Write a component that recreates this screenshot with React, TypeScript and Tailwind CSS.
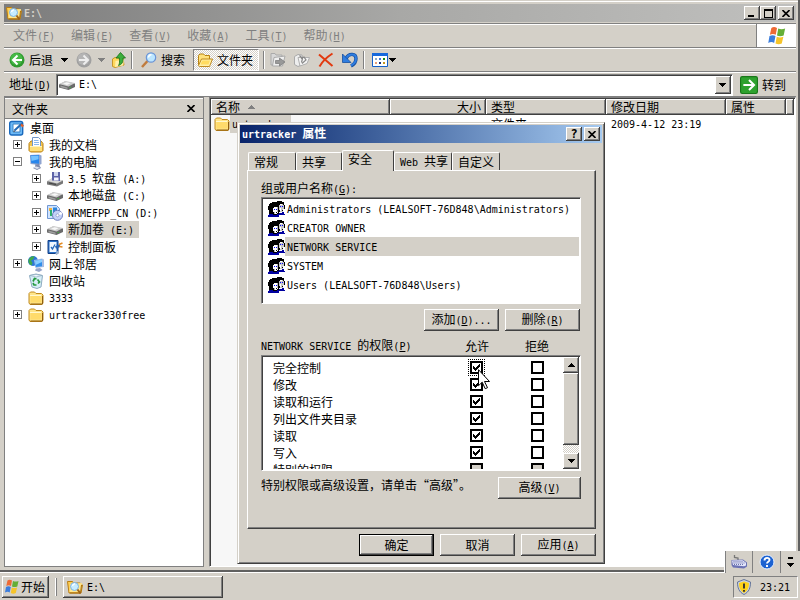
import { useState } from "react";
import type { ReactNode } from "react";

const RAISED =
  "bg-[#d4d0c8] shadow-[inset_-1px_-1px_0_#404040,inset_1px_1px_0_#fff,inset_-2px_-2px_0_#808080]";
const SUNKEN =
  "border border-t-[#808080] border-l-[#808080] border-r-white border-b-white shadow-[inset_1px_1px_0_#404040]";
const BAR = "border-t border-t-white border-b border-b-[#808080]";

// Latin runs are set in the half-width face; "&" marks the underlined access key
function Label({ text, className = "" }: { text: string; className?: string }) {
  return (
    <span className={`whitespace-pre ${className}`}>
      {text.split(/([ -~]+)/).map((part, i) => {
        if (i % 2 === 0) return part;
        const [before, after] = part.split("&");
        return (
          <span key={i} className="font-['DejaVu_Sans_Mono',monospace] text-[10px]">
            {before}
            {after && <u className="underline-offset-1">{after[0]}</u>}
            {after?.slice(1)}
          </span>
        );
      })}
    </span>
  );
}

function Svg({ children, size = 16 }: { children: ReactNode; size?: number }) {
  return (
    <svg width={size} height={size} viewBox="0 0 16 16" className="shrink-0" aria-hidden="true">
      {children}
    </svg>
  );
}

const FolderIcon = () => (
  <Svg>
    <path d="M1 3.5 2.5 2h4L8 3.5h5.5L15 5v8l-1 1.5H2L1 13z" fill="#ffe58a" stroke="#c08a1e" />
    <path d="M2.5 6h11v6.5h-11z" fill="#ffdb6b" />
    <path d="M2 5.5h11" stroke="#fff8d0" />
    <path d="M14.5 6v8H2.5" fill="none" stroke="#8f5f10" />
  </Svg>
);

const FolderSearchIcon = () => (
  <Svg>
    <path d="M.5 2.5h5l1 1.500H13l2.500 2-1.500 8H2z" fill="#ffcf52" stroke="#b97d12" />
    <path d="m3 5 12-1-1.500 9H2.500z" fill="#ffe68c" />
    <path d="M14.500 6 13.500 14H3" fill="none" stroke="#a56d10" />
    <circle cx="7.500" cy="7.500" r="4" fill="#c6ecff" stroke="#7fb3e0" />
    <path d="m10.500 10.500 3 4" stroke="#a06418" strokeWidth="2" />
    <path d="M5.500 7q.5-2.300 2.500-2.200" stroke="#fff" strokeWidth="1.300" fill="none" />
  </Svg>
);

const FolderOpenIcon = () => (
  <Svg>
    <path d="M1.500 13V3.500L3 2h3.500L8 3.500h4.500V7" fill="#ffe27c" stroke="#b98312" />
    <path d="M1.500 13.500 4.500 7h11l-3 7.500h-10z" fill="#fff0a8" stroke="#c08a1e" />
    <path d="m4 11 1.500-2.500h7.500l-1.500 4H3.500z" fill="#ffdc60" />
  </Svg>
);

const ArrowBall = ({ back = false }: { back?: boolean }) => (
  <Svg>
    <circle cx="8" cy="8" r="7.500" fill={back ? "#2f9a2f" : "#a0a0a0"} />
    <circle cx="7.500" cy="7" r="6" fill={back ? "#46b946" : "#b4b4b4"} />
    <path
      d={back ? "M8.500 3.500 4 8l4.500 4.500M4.500 8H13" : "M7.500 3.500 12 8l-4.500 4.500M11.500 8H3"}
      fill="none"
      stroke={back ? "#fff" : "#eee"}
      strokeWidth="2"
    />
  </Svg>
);

const UpIcon = () => (
  <Svg>
    <path d="M1.500 7 4 5.500l3 .5h5l1 7-9 2.500-2.500-1z" fill="#ffd85c" stroke="#c6962b" />
    <path d="M4.500 9 13 7.500l-1 6L4 15z" fill="#fff0ac" />
    <path d="M9.500.5 14.500 6H12c.300 4-1 6.500-4.500 7.500C9 11.500 8.500 9 8.300 6H5z" fill="#3cae3c" stroke="#176f17" strokeWidth=".8" />
  </Svg>
);

const SearchIcon = () => (
  <Svg>
    <path d="m1 15 5.500-6" stroke="#c07b3d" strokeWidth="2.500" />
    <circle cx="10" cy="5.500" r="4.700" fill="#bce6ff" stroke="#6b94d6" strokeWidth="1.200" />
    <path d="M7.500 5.500C7.800 3.500 9 2.700 10.500 2.800" fill="none" stroke="#fff" strokeWidth="1.500" />
  </Svg>
);

const MoveIcon = () => (
  <Svg>
    <path d="M1 1.500h4l1 1.500h6v10H1z" fill="#d8d8d8" stroke="#aaa" />
    <path d="m4 5.500 11-1.500-2.500 10H2.500z" fill="#efefef" stroke="#aaa" />
    <path d="M5.500 8.500h4V6l5.500 4-5.500 4v-2.500h-4z" fill="#999" stroke="#777" strokeWidth=".7" />
  </Svg>
);

const CopyIcon = () => (
  <Svg>
    <path d="M.5 4.500 4 2.500l4 .5 2 9-6 2.500-3.500-2z" fill="#eee" stroke="#aaa" />
    <path d="M4 5.500h11.500l-2.500 6-7 2.500z" fill="#f4f4f4" stroke="#b0b0b0" />
    <path d="m5.500 3.500 3 3-1 4M7 6.500l3-1.500 2 3-4 3.500" fill="none" stroke="#888" strokeWidth="1.200" />
  </Svg>
);

const DeleteIcon = () => (
  <Svg>
    <path d="M1 2.500 14.500 14M14.500 1.500C9 5 4 10 1.500 14.500" fill="none" stroke="#e23a10" strokeWidth="2" />
  </Svg>
);

const UndoIcon = () => (
  <Svg>
    <path d="M4 6.500C7 .500 14 1.500 14 6.500c0 3.500-2 6-5 7.500" fill="none" stroke="#174f9f" strokeWidth="3.400" />
    <path d="M4 6.500C7 1 14 1.500 14 6.500c0 3.500-2 5.500-5 7" fill="none" stroke="#2f7de0" strokeWidth="2" />
    <path d="M.5 2v8.500H9L6.500 8 3.500 5z" fill="#2f7de0" stroke="#174f9f" strokeWidth=".8" />
  </Svg>
);

const ViewsIcon = () => (
  <Svg>
    <path d="M.5 1.500h15v13H.5z" fill="#fff" stroke="#1560c8" />
    <path d="M0 1h16v3H0z" fill="#1668dc" />
    <path d="M3 6h2v2H3z" fill="#8aa8c8" />
    <path d="M7 6h2v2H7z" fill="#3f77d9" />
    <path d="M11 6h2v2h-2z" fill="#158a15" />
    <path d="M3 10h2v2H3z" fill="#e8a07a" />
    <path d="M7 10h2v2H7z" fill="#17317e" />
    <path d="M11 10h2v2h-2z" fill="#c9961c" />
  </Svg>
);

const FlagIcon = ({ size = 16 }: { size?: number }) => (
  <Svg size={size}>
    <path d="M3.500 1.500q2-1.300 4.500 0L7 7Q4.800 5.700 2.300 7z" fill="#ee6a35" />
    <path d="M9 2q2.500 1.200 5.500 0L13.300 7.500Q10.500 8.700 8 7.500z" fill="#65ae35" />
    <path d="M2 8q2.500-1.300 4.800 0l-1.100 5.500q-2-1.300-4.700 0z" fill="#3b7ddd" />
    <path d="M7.800 8.500q2.500 1.200 5.300 0l-1.300 5.500q-2.500 1.300-5 0z" fill="#f6c42a" />
  </Svg>
);

const DriveIcon = () => (
  <Svg>
    <path d="M0 7.500 6 4.500l10 2v3.500L9.500 13 0 10.500z" fill="#6a6a6a" />
    <path d="m0 7 6.500-3L16 6 9.500 9.500z" fill="#cfcfcf" />
    <path d="m4 6.800 3.500-1.500 4 .9L8 8z" fill="#f8f8f8" />
    <path d="m1.500 8.500 7 2v1.500l-7-1.800z" fill="#a0a0a0" />
    <path d="M10.500 10.500h1.500" stroke="#4a4" />
  </Svg>
);

const FloppyIcon = () => (
  <Svg>
    <path d="m0 10.500 5-3 11 2v3L10 15.500 0 13.500z" fill="#777" />
    <path d="m0 10 5.500-3L16 9.500 10 12.500z" fill="#d8d8d8" />
    <path d="M5 1h8v9l-8-.5z" fill="#5d63a8" />
    <path d="M7 1h4v4H7z" fill="#cfd6ee" />
    <path d="M7 6.500h4.500v3H7z" fill="#f4f4ff" />
    <path d="m2 12 7 1.500" stroke="#444" />
  </Svg>
);

const CdIcon = () => (
  <Svg>
    <path d="M.5.5h9l3 3v10H.5z" fill="#cfe3ff" stroke="#6f97d2" />
    <path d="M2 3h3v3H2z" fill="#f2b33c" />
    <path d="M3 5h2v6H3z" fill="#2fae6c" />
    <path d="M6 2.500h4v5H6z" fill="#2d86dc" />
    <circle cx="10.500" cy="10.300" r="5" fill="#c3d2f8" stroke="#6c7cb8" />
    <path d="M10.500 10 14 6.500a5 5 0 0 1 1.200 3z" fill="#fff" />
    <circle cx="10.500" cy="10.300" r="1.500" fill="#fff" stroke="#7484bb" strokeWidth=".6" />
  </Svg>
);

const DesktopIcon = () => (
  <Svg>
    <rect x=".7" y="1.500" width="13" height="13.500" rx="2" fill="#6db9f5" stroke="#1969bd" strokeWidth="1.400" />
    <path d="M4 4h7v8H4z" fill="#fff" stroke="#3b82c4" />
    <path d="M5.500 10.500 13 3.500" stroke="#2369b5" strokeWidth="2" />
    <path d="M12.500 3.500 15 5.500l-1.500 2-2-2z" fill="#e2622b" />
    <path d="m5 10 1 1.500L4.500 12z" fill="#333" />
  </Svg>
);

const DocumentsIcon = () => (
  <Svg>
    <path d="M1 6.500 3 4h10l2 2.500v7L13.500 15h-11L1 13.500z" fill="#f5c64e" stroke="#b98116" />
    <path d="M4.500.5h6l2 2V10h-8z" fill="#fff" stroke="#7296c8" />
    <path d="M6 3.500h4.500M6 5.500h5M6 7.500h5" stroke="#8ab7ea" />
    <path d="M2 9.500h12V14H2z" fill="#ffe07a" />
    <path d="M2 9.500h12" stroke="#fff3bd" />
  </Svg>
);

const ComputerIcon = () => (
  <Svg>
    <path d="m2 1 9-.5 2.500 1V10l-2.500 1-8.500-1z" fill="#8fa4d0" />
    <path d="m2.500 1.500 8.500-.4V9.800l-7.800-.8z" fill="#2785ec" />
    <path d="m3 2 7.500-.3v3.500L3.500 7z" fill="#75c3ff" />
    <path d="m7 10.500 4-.5 1 2.500 1 1.500-4 2-4-2 2.500-1.500z" fill="#7d89ac" />
    <path d="m5.500 13.500 3-1 3.500 1.200-3 1.300z" fill="#e0e4f0" />
  </Svg>
);

const ControlPanelIcon = () => (
  <Svg>
    <path d="M1 1.500h10v13H1z" fill="#2b71c8" stroke="#123f86" />
    <path d="M2.500 3h7v10h-7z" fill="#f1f7ff" />
    <path d="m4 8 1.500 2L8 5.500" fill="none" stroke="#2468b9" strokeWidth="1.300" />
    <path d="M8.500 8.500 13 6.500" stroke="#2864b4" strokeWidth="2.500" />
    <path d="m12 5.500 3.500-1.500M12.500 7.500l3 .5" stroke="#e38b24" strokeWidth="1.500" />
    <path d="m9 15.500 2.500-3" stroke="#9fb3cf" strokeWidth="2" />
  </Svg>
);

const NetworkIcon = () => (
  <Svg>
    <circle cx="5" cy="5" r="5" fill="#2d77d4" />
    <path d="M1 3C2.500 1 4 0 6.500.5L5 3.500 3 4.500 4.500 7l-1 2.500Q0 8 .5 4z" fill="#3ea94b" />
    <path d="m6 4 8-1.500 2 1V11l-8.500 1z" fill="#a9bde3" />
    <path d="m7 4.800 7-1.300v6.800l-6.200.8z" fill="#318eea" />
    <path d="m7 4.800 7-1.300v2.500L7.500 9z" fill="#8acfff" />
    <path d="m8 12.500 4-.5 2.500 2-3.500 2-4-1.500z" fill="#98a5c9" />
  </Svg>
);

const RecycleIcon = () => (
  <Svg>
    <path d="M1.500 2.500 8 1l6.500 1.500L13 14l-4 1.500L4 14z" fill="#d7edf7" stroke="#8dabc0" />
    <path d="m2 2.500 6 1.500 6-1.500L8 1.500z" fill="#f5fcff" stroke="#8dabc0" strokeWidth=".7" />
    <path d="m5 8.500 1.500-3 2 .5M9.500 6.500l2 2.500-1.500 1.500M8.500 12H6l-1-2" fill="none" stroke="#249a3f" strokeWidth="1.700" />
  </Svg>
);

const UsersIcon = () => (
  <svg width="17" height="16" viewBox="0 0 17 16" className="shrink-0" shapeRendering="crispEdges" aria-hidden="true">
    <path d="M9 0h5v1h2v3h-1v7h-4v2H8V2h1z" fill="#000" />
    <path d="M11 4h1V3h3v1h1v4h-1v3h-3V9h-1z" fill="#c8c8c8" />
    <path d="M12 3h2v1h-2zM12 7h1v3h-1z" fill="#fff" />
    <path d="M12 5h1v1h-1zM14 5h1v1h-1z" fill="#00f" />
    <path d="M14 9h1v1h-1zM16 4h1v4h-1z" fill="#000" />
    <path d="M11 12h3v-1h2v2h1v1h-6z" fill="#0000a0" />
    <path d="M4 1h5v1h2v11H9v1H3v-1H1V9H0V5h1V3h1V2h2z" fill="#000" />
    <path d="M5 7h1V6h4v6H9v1H6v-2H5z" fill="#fff" />
    <path d="M9 6h1v5H9zM6 11h1v2H6z" fill="#b8b8b8" />
    <path d="M6 8h1v1H6zM8 8h1v1H8z" fill="#00f" />
    <path d="M8 11h1v1H8z" fill="#000" />
    <path d="M1 13h4v1h4v-1h2v3H0v-2h1z" fill="#0000a0" />
  </svg>
);

const GoIcon = () => (
  <Svg size={18}>
    <rect x=".5" y=".5" width="15" height="15" rx="1.500" fill="#2ea12e" stroke="#197819" />
    <path d="M3 8h9M8 3.500 12.500 8 8 12.500" fill="none" stroke="#fff" strokeWidth="1.800" />
  </Svg>
);

const KeyboardIcon = () => (
  <Svg>
    <path d="M7 6V4L3.500 3.500V1" fill="none" stroke="#777" strokeWidth="1.300" />
    <path d="M.5 6 12 5.500l4 3v4l-3 2-11-1L.5 11z" fill="#6b72b4" />
    <path d="m1 6.500 10.500-.3 3.500 2.500v2.800l-2 .8L2 11z" fill="#e4e6fb" />
    <path d="M2.500 7.700H12M2.500 9H14M3 10.400h10" stroke="#6068a4" strokeDasharray="1 1" />
  </Svg>
);

const HelpIcon = () => (
  <Svg>
    <circle cx="8" cy="8" r="7" fill="#1c62d1" stroke="#e8f1ff" />
    <path d="M5.500 6.500C5.500 3 10.800 3.200 10.500 6 10.400 7.700 8 7.800 8 9.500M8 11v2" fill="none" stroke="#fff" strokeWidth="1.900" />
  </Svg>
);

const ShieldIcon = () => (
  <Svg>
    <path d="M8 .5 14.500 3c0 6-1.500 10-6.500 12.500C3 13 1.500 9 1.500 3z" fill="#c9d1df" stroke="#65769a" />
    <path d="m8 2.500 5 1.500c0 5-1.500 8-5 10-3.500-2-5-5-5-10z" fill="#ffd21a" />
    <path d="M8 4.500v5M8 11v1.800" stroke="#333" strokeWidth="1.900" />
  </Svg>
);

const Triangle = ({ up = false, className = "" }: { up?: boolean; className?: string }) => (
  <svg width="7" height="4" viewBox="0 0 7 4" className={`shrink-0 ${className}`} shapeRendering="crispEdges" aria-hidden="true">
    <path d={up ? "M0 4 3.500 0 7 4z" : "M0 0h7L3.500 4z"} fill="currentColor" />
  </svg>
);

const CloseGlyph = () => (
  <svg width="8" height="7" viewBox="0 0 8 7" aria-hidden="true">
    <path d="m.5 0 7 7M7.500 0l-7 7" stroke="#000" strokeWidth="1.600" />
  </svg>
);

function CaptionButton({ label, children }: { label: string; children: ReactNode }) {
  return (
    <button aria-label={label} className={`flex h-[14px] w-4 items-center justify-center ${RAISED}`}>
      {children}
    </button>
  );
}

const Separator = () => <div className="mx-1 h-[18px] w-[2px] border-l border-l-[#808080] bg-white" />;

const menus = ["文件(&F)", "编辑(&E)", "查看(&V)", "收藏(&A)", "工具(&T)", "帮助(&H)"];

function ToolBar() {
  return (
    <div className={`flex h-6 items-center pl-[5px] ${BAR}`}>
      <button className="flex items-center gap-1">
        <ArrowBall back />
        <Label text="后退" />
      </button>
      <button aria-label="后退列表" className="px-2"><Triangle /></button>
      <button aria-label="前进"><ArrowBall /></button>
      <button aria-label="前进列表" className="px-[6px] text-[#808080]"><Triangle /></button>
      <button aria-label="向上"><UpIcon /></button>
      <Separator />
      <button className="flex items-center gap-1 px-1">
        <SearchIcon />
        <Label text="搜索" />
      </button>
      <button
        aria-pressed="true"
        className="ml-1 flex h-[22px] items-center gap-1 border border-t-[#808080] border-r-white border-b-white border-l-[#808080] bg-[repeating-conic-gradient(#fff_0_25%,#d4d0c8_0_50%)] bg-[length:2px_2px] pr-[5px] pl-[3px]"
      >
        <FolderOpenIcon />
        <Label text="文件夹" />
      </button>
      <Separator />
      <div className="flex gap-2 px-px">
        <button aria-label="移至"><MoveIcon /></button>
        <button aria-label="复制到"><CopyIcon /></button>
        <button aria-label="删除"><DeleteIcon /></button>
        <button aria-label="撤消"><UndoIcon /></button>
      </div>
      <Separator />
      <button aria-label="查看方式" className="flex items-center gap-px px-[3px]">
        <ViewsIcon />
        <Triangle />
      </button>
    </div>
  );
}

function AddressBar() {
  return (
    <div className={`flex h-[25px] items-center ${BAR}`}>
      <label htmlFor="address" className="w-[52px] pl-[5px]">
        <Label text="地址(&D)" />
      </label>
      <div className={`flex h-[22px] flex-1 items-center bg-white p-px pl-[2px] ${SUNKEN}`}>
        <DriveIcon />
        <input
          id="address"
          defaultValue="E:\"
          className="min-w-0 flex-1 px-1 font-['DejaVu_Sans_Mono',monospace] text-[10px] outline-none"
        />
        <button aria-label="地址列表" className={`flex h-[18px] w-4 items-center justify-center ${RAISED}`}>
          <Triangle />
        </button>
      </div>
      <button className="flex items-center gap-1 pr-[10px] pl-[7px]">
        <GoIcon />
        <Label text="转到" />
      </button>
    </div>
  );
}

type Node = { name: string; icon: ReactNode; level: number; mark?: "+" | "-"; selected?: boolean };

const nodes: Node[] = [
  { name: "桌面", icon: <DesktopIcon />, level: 0 },
  { name: "我的文档", icon: <DocumentsIcon />, level: 1, mark: "+" },
  { name: "我的电脑", icon: <ComputerIcon />, level: 1, mark: "-" },
  { name: "3.5 软盘 (A:)", icon: <FloppyIcon />, level: 2, mark: "+" },
  { name: "本地磁盘 (C:)", icon: <DriveIcon />, level: 2, mark: "+" },
  { name: "NRMEFPP_CN (D:)", icon: <CdIcon />, level: 2, mark: "+" },
  { name: "新加卷 (E:)", icon: <DriveIcon />, level: 2, mark: "+", selected: true },
  { name: "控制面板", icon: <ControlPanelIcon />, level: 2, mark: "+" },
  { name: "网上邻居", icon: <NetworkIcon />, level: 1, mark: "+" },
  { name: "回收站", icon: <RecycleIcon />, level: 1 },
  { name: "3333", icon: <FolderIcon />, level: 1 },
  { name: "urtracker330free", icon: <FolderIcon />, level: 1, mark: "+" },
];

const indents = ["pl-1", "pl-2", "pl-[27px]"];

function FolderTree() {
  return (
    <aside className="flex w-[200px] shrink-0 flex-col border border-[#808080] bg-white">
      <div className="flex h-[21px] items-center justify-between border-t border-b border-t-white border-b-[#808080] bg-[#d4d0c8] pr-2 pl-[7px]">
        <Label text="文件夹" />
        <button aria-label="关闭文件夹"><CloseGlyph /></button>
      </div>
      <ul>
        {nodes.map((n) => (
          <li key={n.name} className={`flex h-[17px] items-center ${indents[n.level]}`}>
            {n.level > 0 && (
              <span className="mr-[6px] w-[9px]">
                {n.mark && (
                  <svg width="9" height="9" viewBox="0 0 9 9" className="block" shapeRendering="crispEdges">
                    <path d="M.5.5h8v8h-8z" fill="#fff" stroke="#808080" />
                    <path d={n.mark === "+" ? "M2 4.500h5M4.500 2v5" : "M2 4.500h5"} stroke="#000" />
                  </svg>
                )}
              </span>
            )}
            {n.icon}
            <button className={`ml-[3px] h-[17px] px-[2px] ${n.selected ? "bg-[#d4d0c8] pr-[5px]" : ""}`}>
              <Label text={n.name} />
            </button>
          </li>
        ))}
      </ul>
    </aside>
  );
}

const TH = `h-4 px-[5px] text-left font-normal ${RAISED}`;

function FileList() {
  return (
    <main
      className={`min-w-0 flex-1 overflow-hidden bg-[linear-gradient(90deg,#f7f7f7_180px,#fff_180px)] p-px ${SUNKEN}`}
    >
      <table className="w-full table-fixed border-collapse">
        <colgroup>
          <col className="w-[179px]" />
          <col className="w-24" />
          <col className="w-[120px]" />
          <col className="w-[120px]" />
          <col className="w-[60px]" />
          <col />
        </colgroup>
        <thead>
          <tr>
            <th className={TH}>
              <span className="flex items-center gap-2">
                <Label text="名称" />
                <Triangle up className="text-[#808080]" />
              </span>
            </th>
            <th className={`${TH} text-right`}><Label text="大小" /></th>
            <th className={TH}><Label text="类型" /></th>
            <th className={TH}><Label text="修改日期" /></th>
            <th className={TH}><Label text="属性" /></th>
            <td className={`h-4 ${RAISED}`} />
          </tr>
        </thead>
        <tbody>
          <tr>
            <td className="p-0 pl-[3px]">
              <span className="flex items-center">
                <FolderIcon />
                <Label text="urtracker" className="bg-[#d4d0c8] pr-[5px] pl-[2px]" />
              </span>
            </td>
            <td />
            <td className="p-0 pl-[5px]"><Label text="文件夹" /></td>
            <td className="p-0 pl-[5px]"><Label text="2009-4-12 23:19" /></td>
            <td />
            <td />
          </tr>
        </tbody>
      </table>
    </main>
  );
}

function PushButton({ text, className = "w-[75px]" }: { text: string; className?: string }) {
  return (
    <button className={`h-[22px] ${RAISED} ${className}`}>
      <Label text={text} />
    </button>
  );
}

const tabs = [
  { name: "常规", width: "w-12" },
  { name: "共享", width: "w-[46px]" },
  { name: "安全", width: "w-[52px]" },
  { name: "Web 共享", width: "w-[58px]" },
  { name: "自定义", width: "w-12" },
];

const principals = [
  "Administrators (LEALSOFT-76D848\\Administrators)",
  "CREATOR OWNER",
  "NETWORK SERVICE",
  "SYSTEM",
  "Users (LEALSOFT-76D848\\Users)",
];

const permissions = ["完全控制", "修改", "读取和运行", "列出文件夹目录", "读取", "写入", "特别的权限"];

function Check({ label, checked, disabled, focused }: { label: string; checked: boolean; disabled: boolean; focused?: boolean }) {
  return (
    <label className={`mx-auto grid h-[17px] w-[17px] place-items-center ${focused ? "outline-1 -outline-offset-1 outline-black outline-dotted" : ""}`}>
      <input
        type="checkbox"
        aria-label={label}
        defaultChecked={checked}
        disabled={disabled}
        className="peer [grid-area:1/1] h-[13px] w-[13px] appearance-none border-2 border-black bg-white disabled:bg-[#d4d0c8]"
      />
      <svg
        width="7"
        height="7"
        viewBox="0 0 7 7"
        className="pointer-events-none invisible [grid-area:1/1] peer-checked:visible"
        shapeRendering="crispEdges"
      >
        <path d="M0 2v3l2 2 5-5V0L2 4z" fill="#000" />
      </svg>
    </label>
  );
}

function PermissionList() {
  return (
    <div className={`flex h-[116px] bg-white p-px ${SUNKEN}`}>
      <div className="flex-1 overflow-hidden pt-[2px]">
        <table className="w-full table-fixed border-collapse">
          <colgroup>
            <col />
            <col className="w-[70px]" />
            <col className="w-[52px]" />
          </colgroup>
          <tbody>
            {permissions.map((p, i) => (
              <tr key={p} className="h-[17px]">
                <th className="p-0 pl-[10px] text-left font-normal"><Label text={p} /></th>
                <td className="p-0">
                  <Check label={`${p} 允许`} checked={i < 6} disabled={i === 6} focused={i === 0} />
                </td>
                <td className="p-0">
                  <Check label={`${p} 拒绝`} checked={false} disabled={i === 6} />
                </td>
              </tr>
            ))}
          </tbody>
        </table>
      </div>
      <div className="flex w-4 flex-col bg-[repeating-conic-gradient(#fff_0_25%,#d4d0c8_0_50%)] bg-[length:2px_2px]">
        <button aria-label="向上滚动" className={`flex h-4 items-center justify-center ${RAISED}`}>
          <Triangle up />
        </button>
        <div className={`h-[72px] ${RAISED}`} />
        <button aria-label="向下滚动" className={`mt-auto flex h-4 items-center justify-center ${RAISED}`}>
          <Triangle />
        </button>
      </div>
    </div>
  );
}

function PropertiesDialog() {
  const [tab, setTab] = useState("安全");
  const [principal, setPrincipal] = useState("NETWORK SERVICE");

  return (
    <section
      role="dialog"
      aria-label="urtracker 属性"
      className="absolute top-[122px] left-[237px] w-[368px] border border-t-[#d4d0c8] border-r-[#404040] border-b-[#404040] border-l-[#d4d0c8] bg-[#d4d0c8] p-[2px] pb-[7px] shadow-[inset_1px_1px_0_#fff,inset_-1px_-1px_0_#808080]"
    >
      <header className="flex h-[18px] items-center bg-gradient-to-r from-[#0a246a] to-[#a6caf0] pr-[2px] pl-[2px] font-bold text-white">
        <Label text="urtracker 属性" className="flex-1" />
        <div className="flex gap-[2px]">
          <CaptionButton label="帮助"><span className="font-['DejaVu_Sans_Mono',monospace] text-xs text-black">?</span></CaptionButton>
          <CaptionButton label="关闭"><CloseGlyph /></CaptionButton>
        </div>
      </header>

      <div className="pt-[7px] pr-[6px] pl-[7px]">
        {/* Tabs */}
        <div role="tablist" className="flex h-5 items-end pl-px">
          {tabs.map((t) => (
            <button
              key={t.name}
              role="tab"
              aria-selected={tab === t.name}
              onClick={() => setTab(t.name)}
              className={`rounded-t-[2px] border-t border-r border-l border-t-white border-r-[#404040] border-l-white bg-[#d4d0c8] pl-[5px] text-left ${t.width} ${
                tab === t.name ? "relative -mb-px h-[21px] pb-1" : "h-[18px]"
              }`}
            >
              <Label text={t.name} />
            </button>
          ))}
        </div>

        {/* Security page */}
        <div className="h-[359px] border border-t-white border-r-[#404040] border-b-[#404040] border-l-white pt-[9px] pr-[14px] pl-[13px] shadow-[inset_-1px_-1px_0_#808080]">
          <Label text="组或用户名称(&G):" className="block h-4" />
          <ul className={`mt-px h-[107px] bg-white p-px ${SUNKEN}`}>
            {principals.map((p) => (
              <li key={p} className="flex h-[19px] items-center pl-[5px]">
                <UsersIcon />
                <button
                  onClick={() => setPrincipal(p)}
                  className={`h-[19px] flex-1 pl-[2px] text-left ${principal === p ? "bg-[#d4d0c8]" : ""}`}
                >
                  <Label text={p} />
                </button>
              </li>
            ))}
          </ul>
          <div className="mt-[5px] flex justify-end gap-[6px] pr-px">
            <PushButton text="添加(&D)..." />
            <PushButton text="删除(&R)" />
          </div>
          <div className="mt-[6px] mb-px flex h-[17px] items-center pr-[14px]">
            <Label text={`${principal} 的权限(&P)`} className="flex-1" />
            <span className="w-[60px] text-center">允许</span>
            <span className="w-[60px] text-center">拒绝</span>
          </div>
          <PermissionList />
          <div className="mt-[6px] flex justify-between">
            <Label text="特别权限或高级设置，请单击“高级”。" />
            <PushButton text="高级(&V)" className="w-[83px]" />
          </div>
        </div>

        <div className="mt-[5px] flex justify-end gap-[6px]">
          <PushButton text="确定" className="w-[75px] border border-black" />
          <PushButton text="取消" />
          <PushButton text="应用(&A)" />
        </div>
      </div>
    </section>
  );
}

function TaskBar() {
  return (
    <footer className="relative flex h-7 shrink-0 items-center border-t border-t-white bg-[#d4d0c8] pr-[2px] pl-[2px]">
      <button className={`flex h-[22px] w-[47px] items-center gap-px pl-[2px] ${RAISED}`}>
        <FlagIcon />
        <Label text="开始" />
      </button>
      <div className="mx-[6px] h-[18px] w-[2px] border-l border-l-white bg-[#808080]" />
      <button className={`flex h-[22px] w-40 items-center gap-1 pl-1 ${RAISED}`}>
        <FolderSearchIcon />
        <Label text="E:\" />
      </button>
      <div className="ml-auto flex h-[22px] items-center gap-2 border border-t-[#808080] border-r-white border-b-white border-l-[#808080] px-[2px] pr-[7px]">
        <ShieldIcon />
        <Label text="23:21" />
      </div>

      {/* Language bar floats above the clock */}
      <div className="absolute right-0 bottom-[27px] flex h-[22px] w-[76px] border-l border-l-white bg-[#d4d0c8]">
        <button aria-label="键盘" className="flex w-7 items-center justify-center border-r border-l border-r-[#808080] border-l-[#808080]">
          <KeyboardIcon />
        </button>
        <button aria-label="帮助" className="flex w-7 items-center justify-center border-r border-r-[#808080]">
          <HelpIcon />
        </button>
        <button aria-label="语言栏选项" className="flex flex-1 flex-col items-center justify-center gap-1">
          <span className="h-[2px] w-[5px] bg-black" />
          <Triangle />
        </button>
      </div>
    </footer>
  );
}

export default function App() {
  return (
    <div className="relative flex min-h-screen flex-col overflow-hidden bg-[#d4d0c8] font-['Noto_Sans_CJK_SC',sans-serif] text-xs leading-4 text-black">
      <div className="flex flex-1 flex-col border-r-2 border-b-2 border-r-[#606060] border-b-[#606060] px-[2px] pb-[2px] pt-[2px] pl-1 shadow-[inset_0_1px_0_#d4d0c8,inset_0_2px_0_#fff]">
        <header className="mt-[2px] flex h-[18px] items-center gap-[2px] bg-gradient-to-r from-[#7c7c7c] via-[#a8a8a6] to-[#c0c0be] pr-[2px] pl-[2px] text-[#d4d0c8]">
          <FolderSearchIcon />
          <Label text="E:\" className="flex-1 font-bold" />
          <div className="flex">
            <CaptionButton label="最小化"><span className="mt-[6px] mr-[2px] h-[2px] w-[6px] bg-black" /></CaptionButton>
            <CaptionButton label="最大化"><span className="h-[9px] w-[9px] border border-t-2 border-black" /></CaptionButton>
          </div>
          <CaptionButton label="关闭"><CloseGlyph /></CaptionButton>
        </header>

        <div className="mt-px flex h-[25px] border-t border-b border-t-[#808080] border-b-[#808080]">
          <nav className="flex flex-1 items-center border-t border-t-white pl-px text-[#808080]">
            {menus.map((m) => (
              <button key={m} className="px-2"><Label text={m} /></button>
            ))}
          </nav>
          <div className="flex w-[40px] items-center justify-center border-l border-l-[#808080] bg-white">
            <FlagIcon size={20} />
          </div>
        </div>
        <ToolBar />
        <AddressBar />

        <div className="flex flex-1 gap-[5px] pb-px">
          <FolderTree />
          <FileList />
        </div>
      </div>
      <TaskBar />
      <PropertiesDialog />

      {/* Mouse pointer */}
      <svg width="12" height="21" viewBox="0 0 12 21" className="pointer-events-none absolute top-[369px] left-[478px]" aria-hidden="true">
        <path d="M.5.700v16l3.700-3.500 3 6.500 2.300-1-3-6.200h5z" fill="#fff" stroke="#000" />
      </svg>
    </div>
  );
}
